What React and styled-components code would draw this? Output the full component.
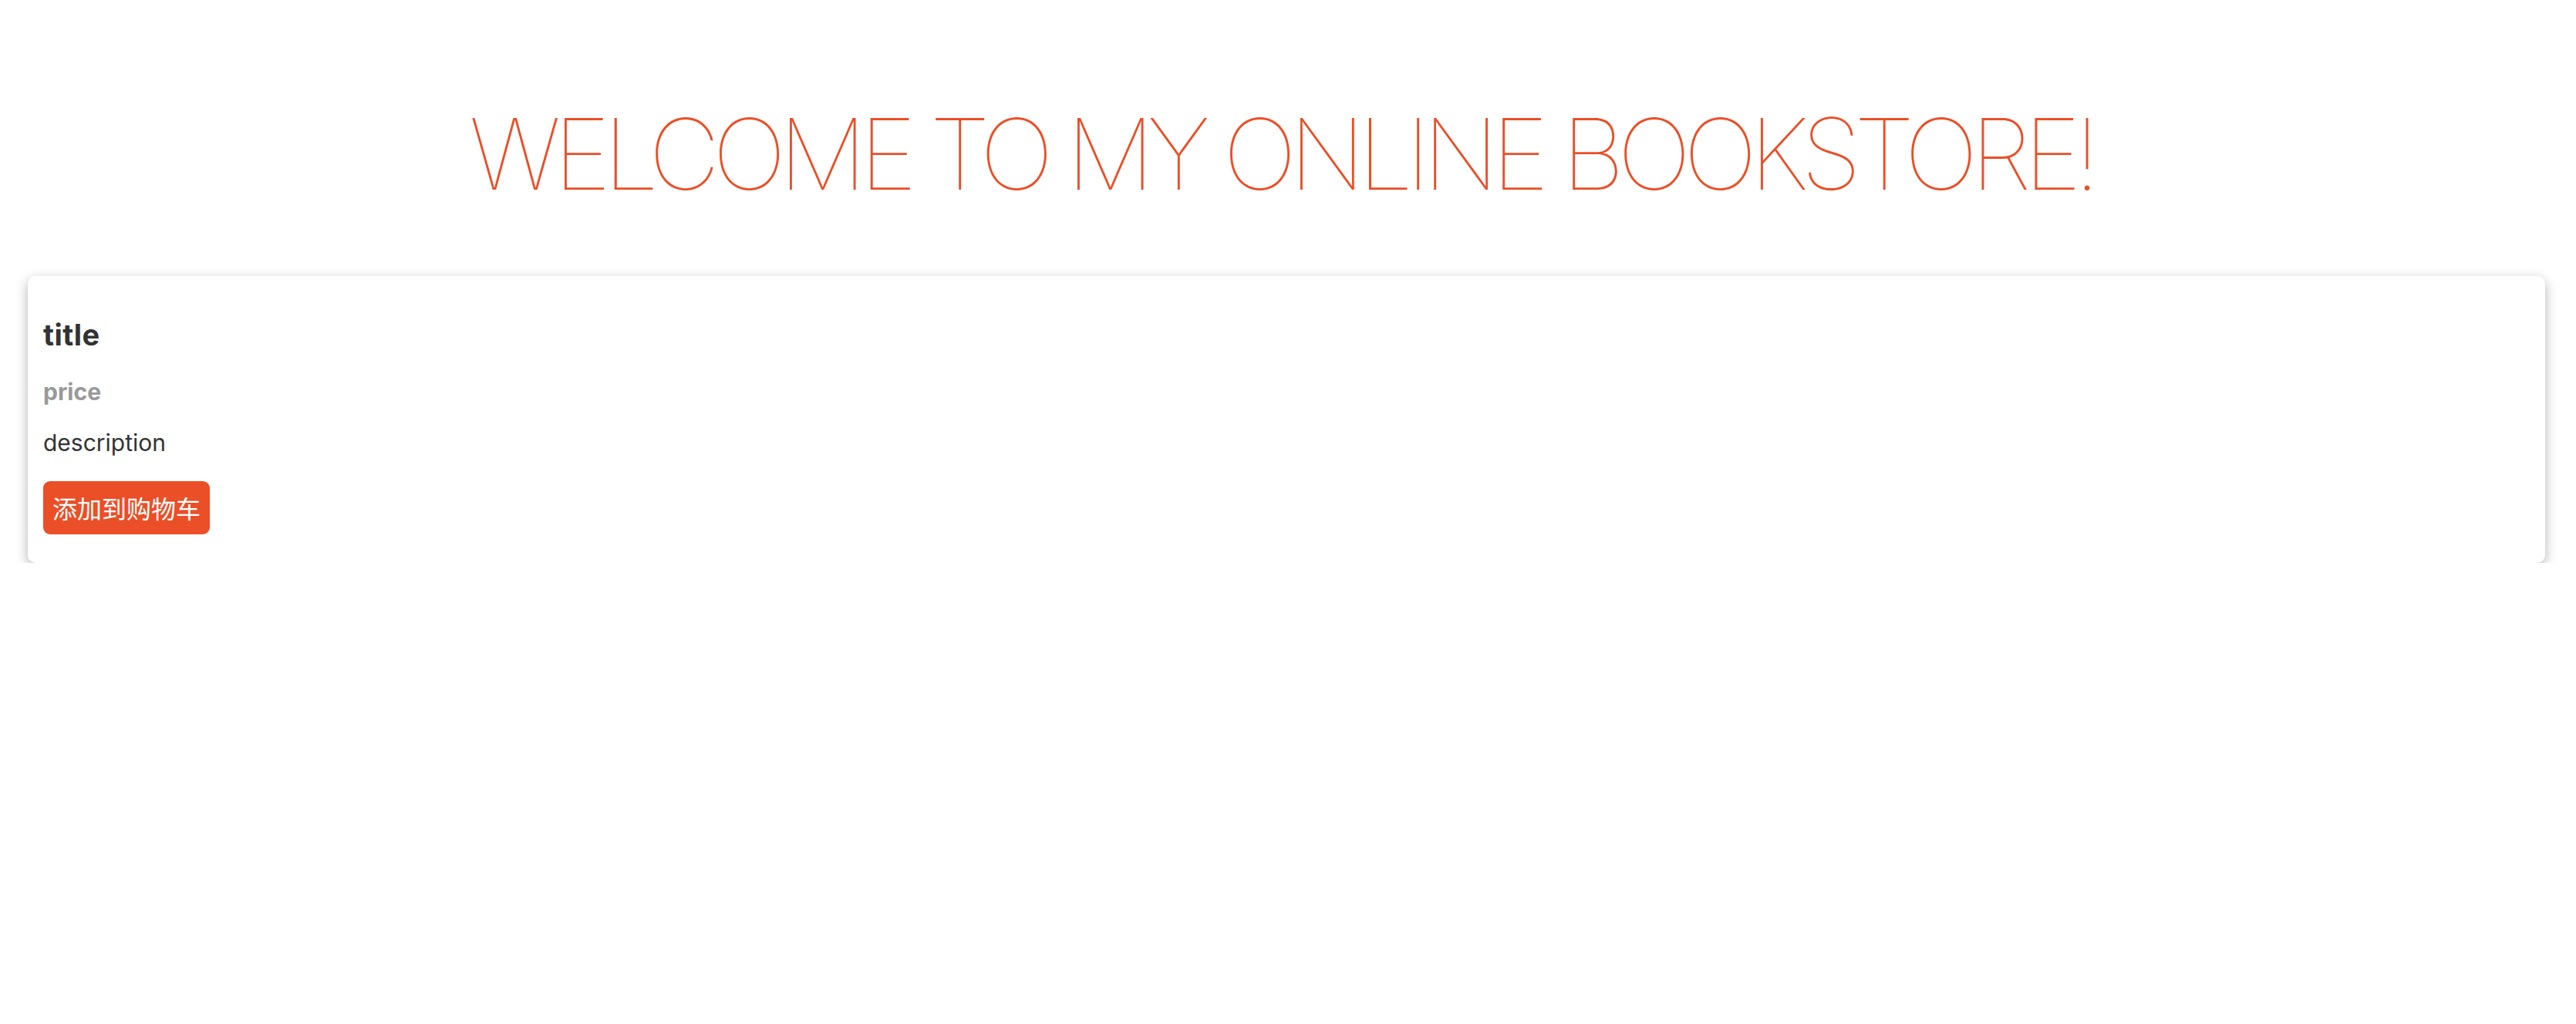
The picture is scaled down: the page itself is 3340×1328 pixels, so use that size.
import React from 'react';
import styled, { createGlobalStyle } from 'styled-components';

const GlobalStyle = createGlobalStyle`
    body {
        margin: 0;
        background: #fff;
        font-family: Inter, "Noto Sans", "Noto Sans CJK SC", sans-serif;
    }
`;

const books = [
    { id: 1, title: 'title', price: 'price', description: 'description' }
];

const Page = styled.div`
    padding: 0 40px 0 36px;
`;

const Heading = styled.h1`
    margin: 0;
    padding: 122px 14px 81px 0;
    text-align: center;
    font-size: 128px;
    font-weight: 100;
    line-height: normal;
    letter-spacing: -9.8px;
    color: #ea4f27;
    white-space: nowrap;
`;

const BookList = styled.div`
    display: flex;
    flex-direction: column;
    gap: 40px;
`;

const Card = styled.div`
    background: #fff;
    border-radius: 10px;
    padding: 20px 20px 37px;
    box-shadow: 0 5px 16px rgba(0, 0, 0, 0.3);
    display: flex;
    flex-direction: column;
    align-items: flex-start;
`;

const Title = styled.h3`
    margin: 33px 0 0;
    font-size: 38px;
    font-weight: 700;
    line-height: normal;
    letter-spacing: 0.5px;
    color: #333;
`;

const Price = styled.div`
    margin-top: 33px;
    font-size: 30px;
    font-weight: 700;
    line-height: normal;
    color: #999;
`;

const Description = styled.p`
    margin: 30px 0 0;
    font-size: 30px;
    line-height: normal;
    color: #333;
`;

const AddButton = styled.button`
    margin-top: 32px;
    padding: 15px 12px;
    border: none;
    border-radius: 9px;
    background: #ea4f27;
    color: #fff;
    font-family: "Noto Sans CJK SC", sans-serif;
    font-size: 32px;
    line-height: 39px;
    cursor: pointer;
`;

export default function App() {
    return (
        <Page>
            <GlobalStyle />
            <Heading>WELCOME TO MY ONLINE BOOKSTORE!</Heading>
            <BookList>
                {books.map((book) => (
                    <Card key={book.id}>
                        <Title>{book.title}</Title>
                        <Price>{book.price}</Price>
                        <Description>{book.description}</Description>
                        <AddButton>添加到购物车</AddButton>
                    </Card>
                ))}
            </BookList>
        </Page>
    );
}
